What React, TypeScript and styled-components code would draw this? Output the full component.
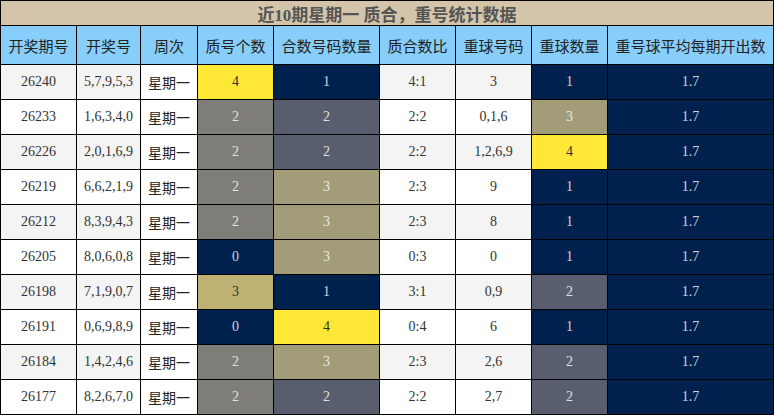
import React from "react";
import styled, { createGlobalStyle } from "styled-components";

const GlobalStyle = createGlobalStyle`
  html, body { margin: 0; padding: 0; background: #ffffff; }
  body { font-family: "Liberation Serif", "Noto Sans CJK SC", serif; }
`;

const Grid = styled.div`
  display: grid;
  grid-template-columns: 75px 63px 56px 75px 105px 75px 75px 75px 165px;
  grid-template-rows: 24px 38px repeat(10, 34px);
  gap: 1px;
  padding: 1px;
  background: #000000;
  width: 774px;
  box-sizing: border-box;
`;

const Title = styled.div`
  grid-column: 1 / -1;
  background: #d4c5aa;
  color: #555555;
  font-family: "Liberation Serif", "Noto Sans CJK SC", sans-serif;
  font-weight: 700;
  font-size: 17px;
  display: flex;
  align-items: center;
  justify-content: center;
`;

const Head = styled.div`
  background: #87cefa;
  color: #222222;
  font-family: "Noto Sans CJK SC", sans-serif;
  font-size: 15px;
  display: flex;
  align-items: center;
  justify-content: center;
  white-space: nowrap;
`;

const Cell = styled.div<{ $bg: string; $fg: string; $cjk?: boolean }>`
  background: ${(p) => p.$bg};
  color: ${(p) => p.$fg};
  font-family: ${(p) =>
    p.$cjk ? '"Noto Sans CJK SC", sans-serif' : '"Liberation Serif", serif'};
  font-size: ${(p) => (p.$cjk ? "14px" : "14px")};
  display: flex;
  align-items: center;
  justify-content: center;
  white-space: nowrap;
`;

type Tone = "yellow" | "navy" | "gray" | "slate" | "khaki" | "tan";

const tones: Record<Tone, { bg: string; fg: string }> = {
  yellow: { bg: "#ffe936", fg: "#333333" },
  navy: { bg: "#00214d", fg: "#d0d4dc" },
  gray: { bg: "#7f7d77", fg: "#e2e2e2" },
  slate: { bg: "#595e6e", fg: "#e2e2e2" },
  khaki: { bg: "#a39c78", fg: "#e8e8e8" },
  tan: { bg: "#bdb273", fg: "#333333" },
};

type Row = {
  issue: string;
  nums: string;
  prime: [string, Tone];
  comp: [string, Tone];
  ratio: string;
  rep: string;
  repCount: [string, Tone];
};

const rows: Row[] = [
  { issue: "26240", nums: "5,7,9,5,3", prime: ["4", "yellow"], comp: ["1", "navy"], ratio: "4:1", rep: "3", repCount: ["1", "navy"] },
  { issue: "26233", nums: "1,6,3,4,0", prime: ["2", "gray"], comp: ["2", "slate"], ratio: "2:2", rep: "0,1,6", repCount: ["3", "khaki"] },
  { issue: "26226", nums: "2,0,1,6,9", prime: ["2", "gray"], comp: ["2", "slate"], ratio: "2:2", rep: "1,2,6,9", repCount: ["4", "yellow"] },
  { issue: "26219", nums: "6,6,2,1,9", prime: ["2", "gray"], comp: ["3", "khaki"], ratio: "2:3", rep: "9", repCount: ["1", "navy"] },
  { issue: "26212", nums: "8,3,9,4,3", prime: ["2", "gray"], comp: ["3", "khaki"], ratio: "2:3", rep: "8", repCount: ["1", "navy"] },
  { issue: "26205", nums: "8,0,6,0,8", prime: ["0", "navy"], comp: ["3", "khaki"], ratio: "0:3", rep: "0", repCount: ["1", "navy"] },
  { issue: "26198", nums: "7,1,9,0,7", prime: ["3", "tan"], comp: ["1", "navy"], ratio: "3:1", rep: "0,9", repCount: ["2", "slate"] },
  { issue: "26191", nums: "0,6,9,8,9", prime: ["0", "navy"], comp: ["4", "yellow"], ratio: "0:4", rep: "6", repCount: ["1", "navy"] },
  { issue: "26184", nums: "1,4,2,4,6", prime: ["2", "gray"], comp: ["3", "khaki"], ratio: "2:3", rep: "2,6", repCount: ["2", "slate"] },
  { issue: "26177", nums: "8,2,6,7,0", prime: ["2", "gray"], comp: ["2", "slate"], ratio: "2:2", rep: "2,7", repCount: ["2", "slate"] },
];

const headers = [
  "开奖期号",
  "开奖号",
  "周次",
  "质号个数",
  "合数号码数量",
  "质合数比",
  "重球号码",
  "重球数量",
  "重号球平均每期开出数",
];

export default function App() {
  return (
    <>
      <GlobalStyle />
      <Grid>
        <Title>近10期星期一 质合，重号统计数据</Title>
        {headers.map((h) => (
          <Head key={h}>{h}</Head>
        ))}
        {rows.map((r, i) => {
          const plain = i % 2 === 0 ? "#f4f4f4" : "#ffffff";
          const fg = "#333333";
          return (
            <React.Fragment key={r.issue}>
              <Cell $bg={plain} $fg={fg}>{r.issue}</Cell>
              <Cell $bg={plain} $fg={fg}>{r.nums}</Cell>
              <Cell $bg="#ffffff" $fg="#222222" $cjk>星期一</Cell>
              <Cell $bg={tones[r.prime[1]].bg} $fg={tones[r.prime[1]].fg}>{r.prime[0]}</Cell>
              <Cell $bg={tones[r.comp[1]].bg} $fg={tones[r.comp[1]].fg}>{r.comp[0]}</Cell>
              <Cell $bg={plain} $fg={fg}>{r.ratio}</Cell>
              <Cell $bg={plain} $fg={fg}>{r.rep}</Cell>
              <Cell $bg={tones[r.repCount[1]].bg} $fg={tones[r.repCount[1]].fg}>{r.repCount[0]}</Cell>
              <Cell $bg={tones.navy.bg} $fg={tones.navy.fg}>1.7</Cell>
            </React.Fragment>
          );
        })}
      </Grid>
    </>
  );
}
